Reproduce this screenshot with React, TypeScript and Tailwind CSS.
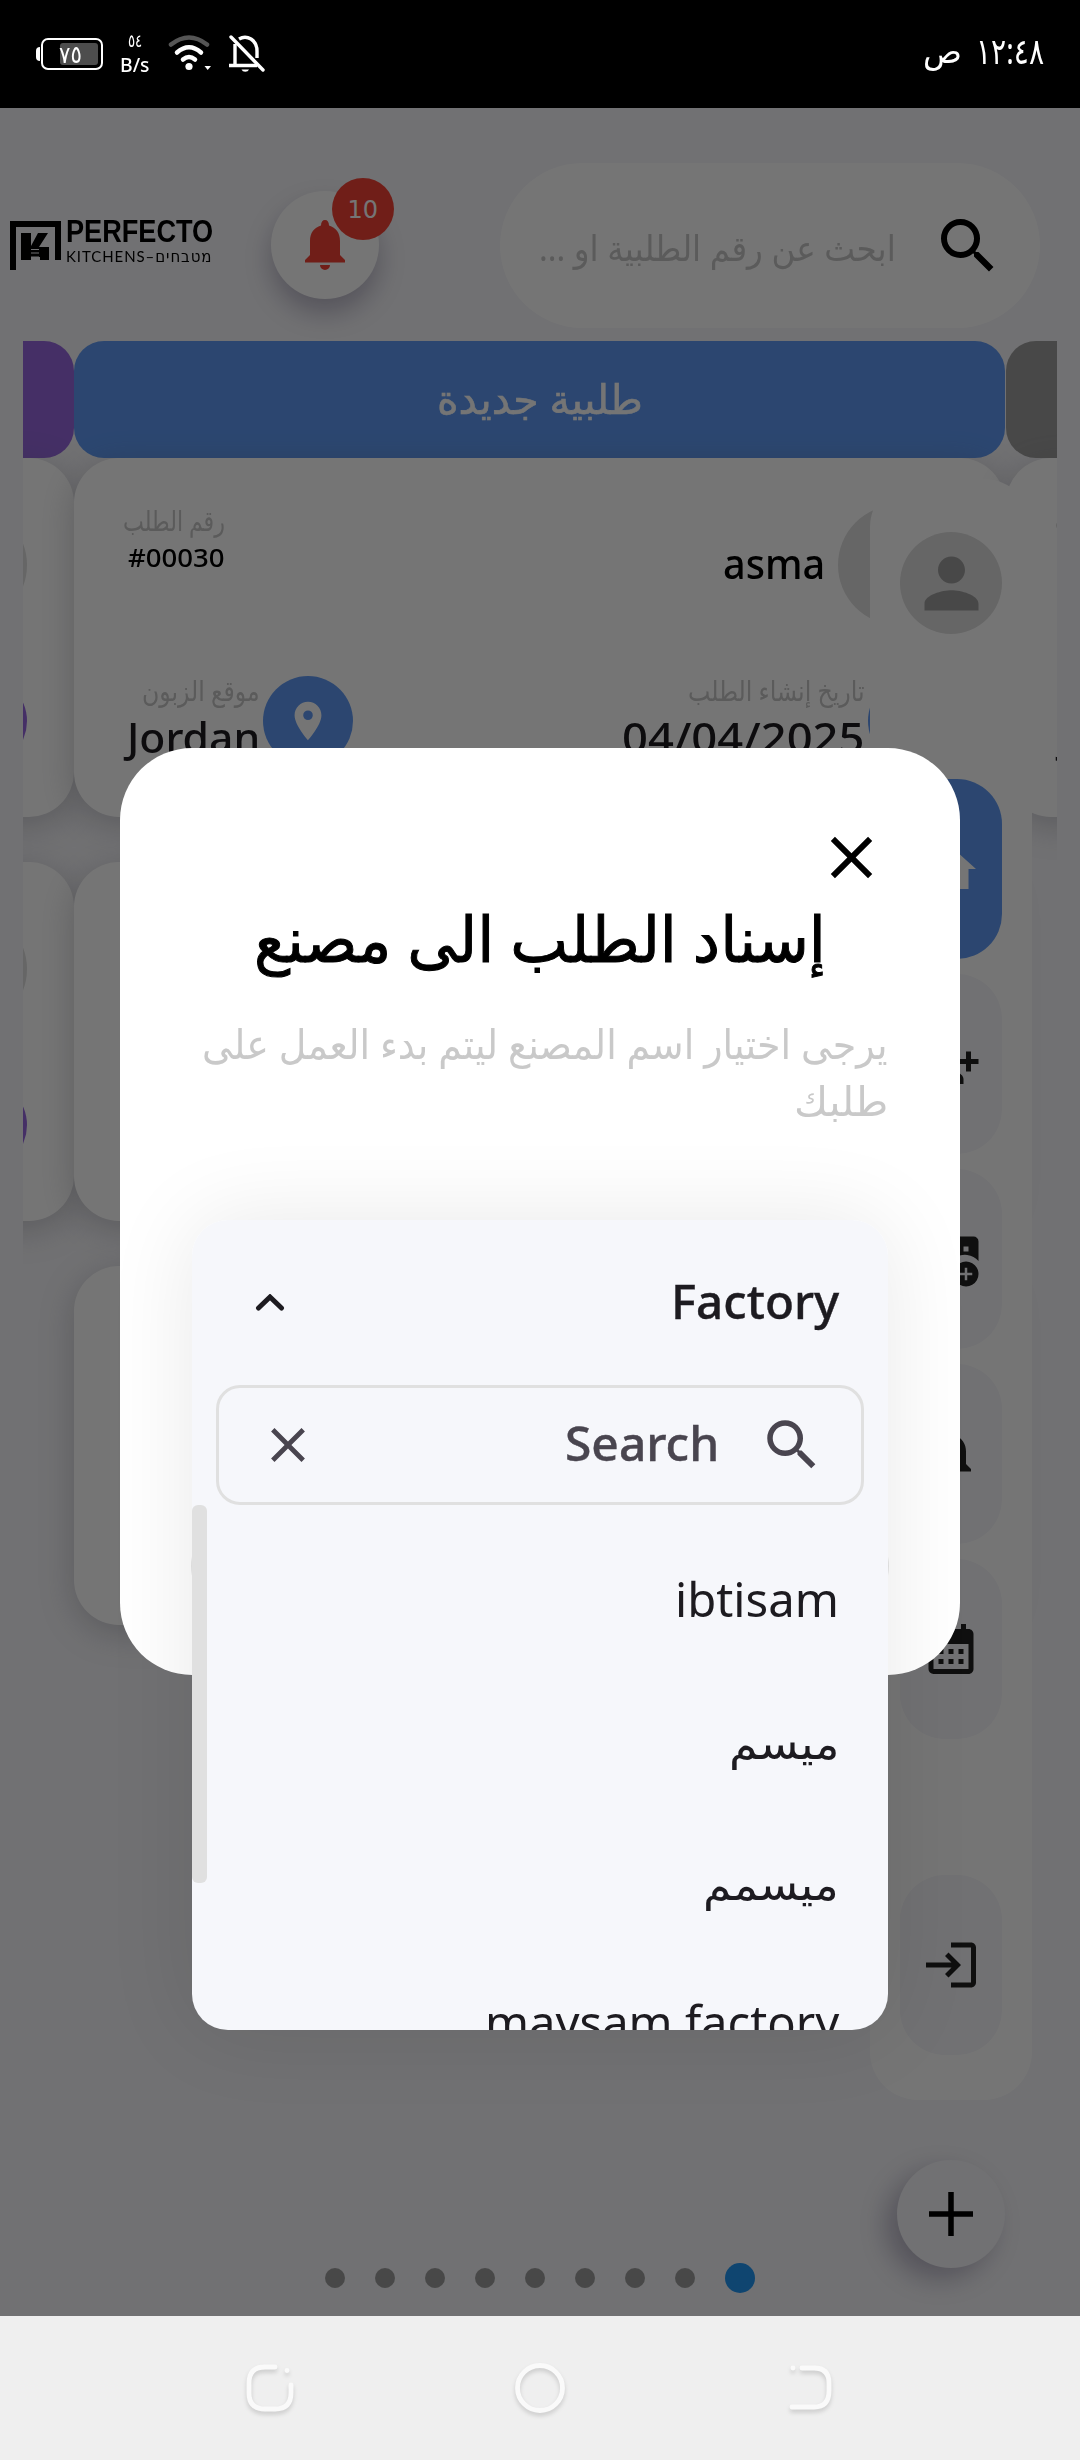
import { useLayoutEffect, useRef, useState, type ReactNode } from "react";
import {
  MdCalendarMonth,
  MdClose,
  MdHome,
  MdLocationOn,
  MdLogin,
  MdNotifications,
  MdPerson,
  MdPersonAddAlt1,
  MdSearch,
} from "react-icons/md";

/** One line of text, stretched horizontally to an exact width. */
function Fit({ w, className = "", children }: { w: number; className?: string; children: ReactNode }) {
  const ref = useRef<HTMLSpanElement>(null);
  const [scale, setScale] = useState(1);
  useLayoutEffect(() => {
    if (ref.current) setScale(w / ref.current.offsetWidth);
  }, [w]);
  return (
    <span dir="ltr" className={`block shrink-0 ${className}`} style={{ width: w }}>
      <span ref={ref} dir="auto" className="block w-max origin-left whitespace-pre" style={{ transform: `scaleX(${scale})` }}>
        {children}
      </span>
    </span>
  );
}

function StatusBar() {
  return (
    <header className="flex h-[108px] shrink-0 items-start justify-between bg-black pl-9 pr-9 text-white">
      <div className="flex pt-[34px]">
        <div className="mt-1 flex h-8 items-center">
          <div className="h-[14px] w-[4px] rounded-l-sm bg-white" />
          <div className="relative ml-px h-8 w-[62px] rounded-[7px] border-[2.5px] border-white p-[3px]">
            <div className="ml-auto h-full w-[38px] rounded-[3px] bg-[#4d4d4d]" />
            <div className="absolute inset-0 flex items-center justify-center pr-1">
              <Fit w={23} className="-mt-px text-[24px] leading-[27px]">٧٥</Fit>
            </div>
          </div>
        </div>
        <div className="ml-[17px] flex w-[30px] flex-col items-center">
          <Fit w={14} className="-mt-0.5 text-[18px] leading-[16px]">٥٤</Fit>
          <Fit w={30} className="mt-[5px] text-[20px] font-medium leading-[24px]">B/s</Fit>
        </div>
        <svg className="ml-[18px] mt-px h-10 w-11" viewBox="0 0 44 40" fill="none" strokeWidth="4.5" strokeLinecap="round">
          <path d="M3 9.500Q21 -4.500 39 9.500" stroke="#555" />
          <path d="M9 17.500Q21 7 33 17.500" stroke="#fff" />
          <path d="M15 24.500Q21 19.500 27 24.500" stroke="#fff" />
          <circle cx="21" cy="31.500" r="3.600" fill="#fff" />
          <path d="M36.500 31h6.500l-3.300 4z" fill="#fff" />
        </svg>
        <svg className="ml-[17px] h-10 w-9" viewBox="0 0 36 40" fill="none" stroke="#fff" strokeWidth="3.400">
          <path d="M2 3L34 36" strokeLinecap="round" />
          <path d="M6 10V31M0 31.500H28M10 5Q16 1.500 22 5Q28 9 28 17V24" />
          <path d="M12.500 35.500a4 3.500 0 0 0 7.500 0z" fill="#fff" stroke="none" />
        </svg>
      </div>
      <div className="flex pt-[31px]" dir="rtl">
        <Fit w={68} className="text-[36px] leading-[40px]">١٢:٤٨</Fit>
        <Fit w={39} className="mr-[14px] text-[33px] leading-[40px]">ص</Fit>
      </div>
    </header>
  );
}

function Logo() {
  return (
    <div className="flex h-12 w-[201px] items-start">
      <svg className="h-[49px] w-[51px] shrink-0" viewBox="0 0 51 49">
        <path d="M0 0H51V39H45V6H6V49H0z" />
        <path d="M11 12H21V25L28 12H38L29 26H39V39H30V36H21V39H11z" />
        <path d="M21 28.500h8M21 32h8M21 36h8" stroke="#f6f6fa" strokeWidth="1.100" />
      </svg>
      <div className="ml-[5px]">
        <Fit w={147} className="font-['Liberation_Sans'] text-[31px] font-bold leading-[22px]">PERFECTO</Fit>
        <Fit w={146} className="mt-[4px] font-['Lato','DejaVu_Sans'] text-[16px] leading-[17px] tracking-[1px]">
          KITCHENS–מטבחים
        </Fit>
      </div>
    </div>
  );
}

function TopBar() {
  return (
    <div className="flex h-[233px] shrink-0 items-start pl-[10px] pr-10 pt-[55px]">
      <div className="mt-[58px]">
        <Logo />
      </div>
      <div className="relative ml-[60px] mt-7 flex size-[108px] items-center justify-center rounded-full bg-white shadow-[0_14px_26px_rgba(60,50,90,0.32)]">
        <svg className="h-[50px] w-10" viewBox="0 0 40 50" fill="#f44336">
          <path d="M20 0c2.500 0 4 2 4 5.500C31 7.500 35 13 35 21V35l5 5v2.500H0V40l5-5V21C5 13 9 7.500 16 5.500C16 2 17.500 0 20 0zM15 45H25a5 5 0 0 1-10 0z" />
        </svg>
        <div className="absolute -right-[15px] -top-[13px] flex size-[62px] items-center justify-center rounded-full bg-[#f44336] text-white">
          <Fit w={31} className="mt-px font-['DejaVu_Sans'] text-[24px] leading-[30px]">10</Fit>
        </div>
      </div>
      <div dir="rtl" className="ml-auto flex h-[165px] w-[540px] items-center rounded-[83px] bg-white pr-[36px]">
        <MdSearch className="size-[72px] shrink-0" />
        <Fit w={357} className="mr-[36px] mt-[5px] text-[35px] leading-[50px] text-[#c6c6c6]">ابحث عن رقم الطلبية او ...</Fit>
      </div>
    </div>
  );
}

function OrderCard({ dot }: { dot: string }) {
  return (
    <article
      dir="rtl"
      className="flex h-[359px] shrink-0 flex-col rounded-[45px] bg-white pl-[49px] pr-[47px] pt-[44px] shadow-[0_8px_34px_rgba(90,90,100,0.3)]"
    >
      <div className="flex h-[126px] items-center justify-between">
        <div className="flex items-center">
          <div className="size-[120px] rounded-full bg-[#dedede]" />
          <Fit w={102} className="-mt-1 mr-[13px] text-[42px] font-medium leading-[60px]">asma</Fit>
        </div>
        <div className="flex flex-col self-start">
          <Fit w={102} className="text-[28px] leading-9 text-[#c6c6c6]">رقم الطلب</Fit>
          <Fit w={97} className="text-[25px] font-medium leading-[38px]">#00030</Fit>
        </div>
      </div>
      <div className="mt-[44px] flex justify-between">
        <div className="flex gap-[3px]">
          <div className={`mt-1 size-[90px] rounded-full ${dot}`} />
          <div>
            <Fit w={177} className="text-[28px] leading-9 text-[#c6c6c6]">تاريخ إنشاء الطلب</Fit>
            <Fit w={243} className="-mt-px text-[42px] font-medium leading-[60px] text-[#1d1b20]">04/04/2025</Fit>
          </div>
        </div>
        <div className="flex gap-[3px]">
          <div className={`mt-1 flex size-[90px] items-center justify-center rounded-full text-white ${dot}`}>
            <MdLocationOn className="size-[46px]" />
          </div>
          <div>
            <Fit w={118} className="text-[28px] leading-9 text-[#c6c6c6]">موقع الزبون</Fit>
            <div className="w-[137px]">
              <Fit w={133} className="-mt-px text-[42px] font-medium leading-[60px] text-[#1d1b20]">Jordan</Fit>
            </div>
          </div>
        </div>
      </div>
    </article>
  );
}

function Column({ bar, dot, count, title }: { bar: string; dot: string; count: number; title?: string }) {
  return (
    <section className="flex w-[931px] shrink-0 flex-col">
      <div className={`flex h-[117px] shrink-0 items-center justify-center rounded-[30px] text-white ${bar}`}>
        {title && <Fit w={206} className="-mt-1 text-[41px] leading-[60px] [-webkit-text-stroke:0.6px_currentColor]">{title}</Fit>}
      </div>
      <div className="flex flex-col gap-[45px]">
        {Array.from({ length: count }, (_, i) => (
          <OrderCard key={i} dot={dot} />
        ))}
      </div>
    </section>
  );
}

/** Rounded building with an "add" badge in its lower right corner. */
function AddBuildingIcon() {
  return (
    <svg className="size-[60px]" viewBox="0 0 24 24" fill="currentColor" fillRule="evenodd">
      <path d="M1 11V21H6V15H10V21H11.700A7 7 0 0 1 23 12.800V5A2 2 0 0 0 21 3H12A2 2 0 0 0 10 5V5.800L13 8V10L8 6.300zM17 7H19V9H17z" />
      <path d="M18 13a5 5 0 1 0 .010 0zM17.500 15.500h1v2h2v1h-2v2h-1v-2h-2v-1h2z" />
    </svg>
  );
}

const tile = "flex h-[180px] w-[102px] shrink-0 items-center justify-center rounded-[45px]";

function Sidebar() {
  return (
    <nav className="absolute left-[870px] top-[371px] flex h-[1621px] w-[162px] flex-col items-center gap-[15px] rounded-[48px] bg-white text-[#212121]">
      <div className="mb-[130px] mt-[53px] flex size-[102px] shrink-0 items-center justify-center rounded-full bg-[#dedede] text-[#9e9e9e]">
        <MdPerson className="size-[81px]" />
      </div>
      <div className={`${tile} bg-[#609af4] text-white`}><MdHome className="size-[60px]" /></div>
      <div className={`${tile} bg-[#f6f6fa]`}><MdPersonAddAlt1 className="size-[60px]" /></div>
      <div className={`${tile} bg-[#f6f6fa]`}><AddBuildingIcon /></div>
      <div className={`${tile} bg-[#f6f6fa]`}><MdNotifications className="size-[60px]" /></div>
      <div className={`${tile} bg-[#f6f6fa]`}><MdCalendarMonth className="size-[60px]" /></div>
      <div className={`${tile} mb-[45px] mt-auto bg-[#f6f6fa]`}><MdLogin className="size-[60px]" /></div>
    </nav>
  );
}

function FactoryMenu() {
  return (
    <div dir="rtl" className="absolute left-[72px] top-[472px] h-[810px] w-[696px] rounded-[36px] shadow-[0_0_90px_rgba(0,0,0,0.09)]">
      <div className="absolute -inset-x-px top-[300px] h-[92px] rounded-[46px] bg-[#dcdcdc]" />
      <div className="relative flex h-full flex-col overflow-hidden rounded-[36px] bg-[#f6f7fb] text-[#1d1b20]">
        <div className="flex h-[165px] shrink-0 items-center justify-between pl-[63px] pr-[49px]">
          <Fit w={168} className="-mt-1 text-[47px] font-medium leading-[60px] [-webkit-text-stroke:0.4px_currentColor]">Factory</Fit>
          <svg className="h-[18px] w-[30px]" viewBox="0 0 30 18" fill="none" stroke="#1d1b20" strokeWidth="5" strokeLinecap="round">
            <path d="M3.500 14L15 3L26.500 14" />
          </svg>
        </div>
        <div className="mx-6 flex h-[120px] shrink-0 items-center rounded-3xl border-[3px] border-[#e0e0e0] pl-[40px] pr-[36px] text-[#49454f]">
          <MdSearch className="size-[66px]" />
          <Fit w={154} className="-mt-1 mr-[40px] text-[47px] font-medium leading-[60px] [-webkit-text-stroke:0.4px_currentColor]">Search</Fit>
          <MdClose className="mr-auto size-[58px]" />
        </div>
        <ul className="relative flex-1 overflow-hidden pr-[49px] pt-[23px]">
          <li className="absolute left-0 top-0 h-[378px] w-[15px] rounded-md bg-[#e0e0e0]" />
          <li className="flex h-[141px] items-center"><Fit w={164} className="text-[47px] leading-[60px]">ibtisam</Fit></li>
          <li className="flex h-[141px] items-center"><Fit w={110} className="mt-1 text-[44px] leading-[60px]">ميسم</Fit></li>
          <li className="flex h-[141px] items-center"><Fit w={136} className="mt-1 text-[44px] leading-[60px]">ميسمم</Fit></li>
          <li className="flex h-[141px] items-center"><Fit w={354} className="text-[47px] leading-[60px]">maysam factory</Fit></li>
        </ul>
      </div>
    </div>
  );
}

function AssignDialog() {
  return (
    <div dir="rtl" className="absolute left-[120px] top-[748px] h-[927px] w-[840px] rounded-[72px] bg-white px-[72px] pt-[73px]">
      <div className="flex h-[72px] items-center">
        <MdClose className="mr-px size-[71px] text-black" />
      </div>
      <div className="mt-[5px] flex justify-center">
        <Fit w={572} className="text-[63px] font-medium leading-[80px] text-black [-webkit-text-stroke:1px_currentColor]">إسناد الطلب الى مصنع</Fit>
      </div>
      <div className="mt-[37px] text-[#c9c9c9]">
        <Fit w={686} className="text-[41px] leading-[57px]">يرجى اختيار اسم المصنع ليتم بدء العمل على</Fit>
        <Fit w={94} className="text-[41px] leading-[57px]">طلبك</Fit>
      </div>
      <FactoryMenu />
    </div>
  );
}

function NavBar() {
  return (
    <footer className="flex h-[144px] shrink-0 items-center justify-between bg-[#efefef] px-[242px]">
      {[
        <path key="r" d="M33 7H23Q7 7 7 23V33Q7 49 23 49H33Q49 49 49 33V25M45 10.500v.010" />,
        <circle key="h" cx="28" cy="28" r="22.500" />,
        <path key="b" d="M20 8H32Q47 8 47 23V31Q47 47 32 47H10M11 8v.010" />,
      ].map((shape, i) => (
        <svg
          key={i}
          className="size-[56px] drop-shadow-[0_3px_2px_rgba(0,0,0,0.15)]"
          viewBox="0 0 56 56"
          fill="none"
          stroke="#fafafa"
          strokeWidth="4.800"
          strokeLinecap="round"
        >
          {shape}
        </svg>
      ))}
    </footer>
  );
}

export default function App() {
  return (
    <div className="relative flex h-[2460px] w-[1080px] flex-col overflow-hidden bg-[#f6f6fa] font-['Noto_Sans','DejaVu_Sans',sans-serif] text-black">
      <StatusBar />
      <main className="relative flex h-[2208px] shrink-0 flex-col overflow-hidden">
        <TopBar />
        <div className="mx-[23px] flex h-[1820px] shrink-0 overflow-hidden">
          <div className="-ml-[880px] flex w-max">
            <Column bar="bg-[#9668de]" dot="bg-[#9668de]" count={2} />
            <Column bar="bg-[#609af4]" dot="bg-[#609af4]" count={3} title="طلبية جديدة" />
            <div className="ml-px"><Column bar="bg-[#9e9e9e]" dot="bg-[#9e9e9e]" count={1} /></div>
          </div>
        </div>
        <div className="mt-[102px] flex h-[30px] items-center gap-[30px] pl-[325px]">
          {Array.from({ length: 8 }, (_, i) => (
            <span key={i} className="size-5 rounded-full bg-[#9e9e9e]" />
          ))}
          <span className="size-[30px] rounded-full bg-[#2196f3]" />
        </div>
        <Sidebar />
        <div className="absolute left-[897px] top-[2052px] flex size-[108px] items-center justify-center rounded-full bg-[#f6f6fa] shadow-[-11px_11px_26px_rgba(60,50,90,0.32)]">
          <svg className="size-11" viewBox="0 0 44 44" stroke="#000" strokeWidth="5.500">
            <path d="M22 0V44M0 22H44" />
          </svg>
        </div>
        <div className="absolute inset-0 bg-black/54" />
      </main>
      <AssignDialog />
      <NavBar />
    </div>
  );
}
